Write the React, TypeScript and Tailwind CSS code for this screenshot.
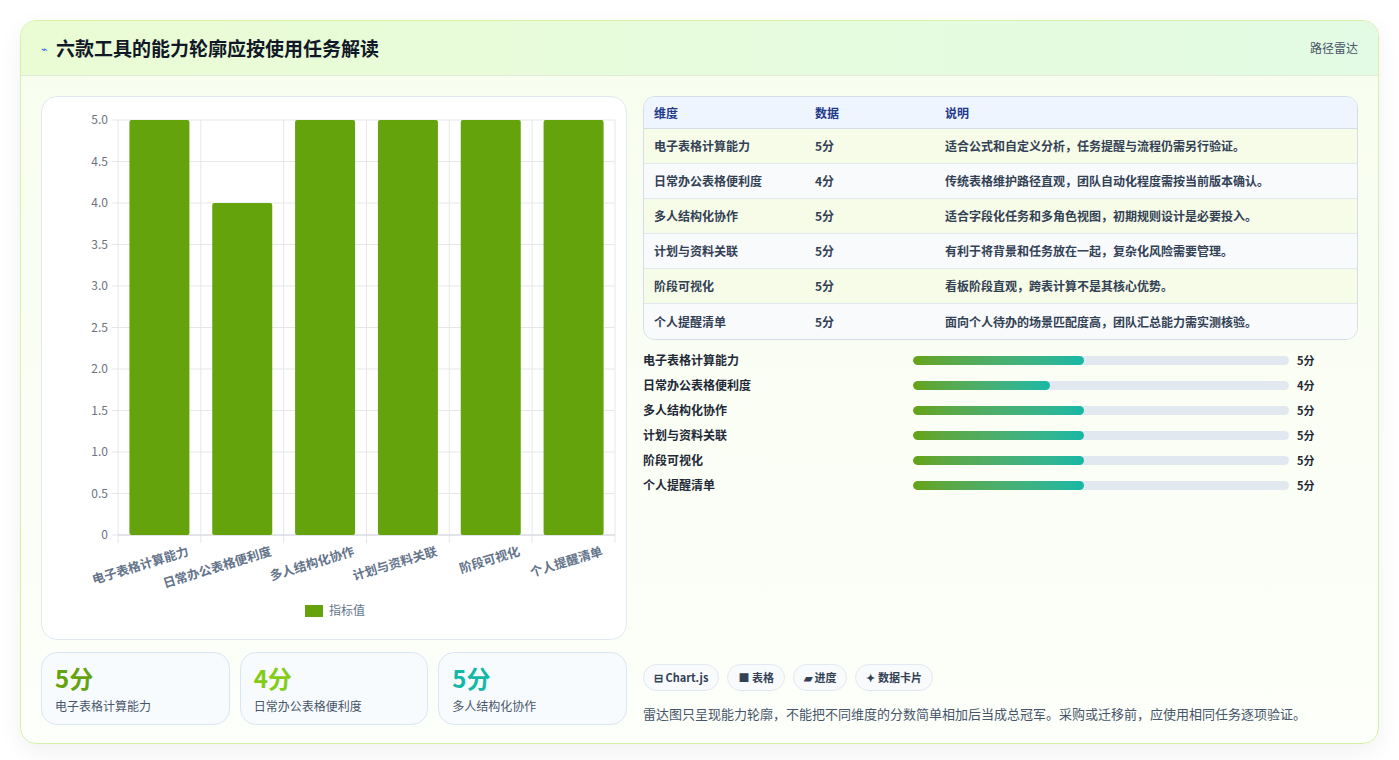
import React from "react";

const dims = [
  ["电子表格计算能力", 5, "适合公式和自定义分析，任务提醒与流程仍需另行验证。"],
  ["日常办公表格便利度", 4, "传统表格维护路径直观，团队自动化程度需按当前版本确认。"],
  ["多人结构化协作", 5, "适合字段化任务和多角色视图，初期规则设计是必要投入。"],
  ["计划与资料关联", 5, "有利于将背景和任务放在一起，复杂化风险需要管理。"],
  ["阶段可视化", 5, "看板阶段直观，跨表计算不是其核心优势。"],
  ["个人提醒清单", 5, "面向个人待办的场景匹配度高，团队汇总能力需实测核验。"],
] as const;

const font = { fontFamily: '"Noto Sans CJK SC", "Noto Sans", sans-serif' };

function Chart() {
  const x0 = 76, x1 = 573, yTop = 23, yBot = 438;
  const step = (x1 - x0) / 6;
  const ticks = [0, 0.5, 1, 1.5, 2, 2.5, 3, 3.5, 4, 4.5, 5];
  return (
    <svg width="586" height="542" style={font}>
      {ticks.map((t) => {
        const y = yBot - (t / 5) * (yBot - yTop);
        return (
          <g key={t}>
            <line x1={x0 - 6} x2={x1} y1={y} y2={y} stroke="#e5e7eb" />
            <text x={x0 - 10} y={y + 4} fontSize="12" fill="#6b7280" textAnchor="end">
              {t === 0 ? "0" : t.toFixed(1)}
            </text>
          </g>
        );
      })}
      {Array.from({ length: 7 }).map((_, i) => (
        <line key={i} x1={x0 + i * step} x2={x0 + i * step} y1={yTop} y2={yBot + 8} stroke="#e5e7eb" />
      ))}
      <line x1={x0} x2={x1} y1={yBot} y2={yBot} stroke="#d1d5db" />
      {dims.map((d, i) => {
        const h = (d[1] / 5) * (yBot - yTop);
        const cx = x0 + i * step + step / 2;
        return (
          <g key={i}>
            <rect x={cx - 30} y={yBot - h} width="60" height={h} rx="2" fill="#65a30d" />
            <text x={cx + 30} y={yBot + 20} fontSize="12.5" fontWeight="700" fill="#64748b" textAnchor="end" transform={`rotate(-17 ${cx + 30} ${yBot + 20})`}>
              {d[0]}
            </text>
          </g>
        );
      })}
      <rect x="263" y="508" width="18" height="12" fill="#65a30d" />
      <text x="287" y="518" fontSize="12" fill="#64748b">指标值</text>
    </svg>
  );
}

export default function App() {
  const statColors = ["#65a30d", "#84cc16", "#14b8a6"];
  return (
    <div className="min-h-[760px] bg-white p-5" style={font}>
      <div className="rounded-2xl border border-[#d9f0a8] bg-gradient-to-b from-[#f7fdee] to-[#fdfffa] shadow-[0_8px_24px_rgba(0,0,0,0.06)] overflow-hidden">
        <div className="h-[55px] flex items-center justify-between px-5 bg-gradient-to-r from-[#eafcd4] to-[#e3fbe4] border-b border-[#e2ebd6]">
          <div className="flex items-center gap-2">
            <span className="text-[#2563eb] text-[11px]">⌁</span>
            <span className="text-[19px] font-bold text-[#111827]">六款工具的能力轮廓应按使用任务解读</span>
          </div>
          <span className="text-[12px] text-[#475569]">路径雷达</span>
        </div>
        <div className="flex gap-4 p-5 pb-[18px]">
          <div className="w-[586px] flex flex-col gap-3">
            <div className="h-[544px] rounded-2xl border border-[#e2e8f0] bg-white">
              <Chart />
            </div>
            <div className="grid grid-cols-3 gap-[10px]">
              {dims.slice(0, 3).map((d, i) => (
                <div key={i} className="h-[73px] rounded-2xl border border-[#dbe6f3] bg-[#f8fbfd] px-[13px] pt-[10px]">
                  <div className="text-[24px] font-bold leading-[30px]" style={{ color: statColors[i] }}>{d[1]}分</div>
                  <div className="text-[12px] text-[#475569] mt-[4px]">{d[0]}</div>
                </div>
              ))}
            </div>
          </div>
          <div className="flex-1 flex flex-col">
            <div className="rounded-xl border border-[#d5dde8] overflow-hidden text-[12px] font-semibold text-[#334155]">
              <div className="flex h-[32px] items-center bg-[#eef5fe] text-[#1e3a8a] border-b border-[#d5dde8]">
                <div className="w-[171px] pl-[10px]">维度</div>
                <div className="w-[130px]">数据</div>
                <div>说明</div>
              </div>
              {dims.map((d, i) => (
                <div key={i} className={`flex h-[35px] items-center ${i < 5 ? "border-b border-[#e2e8f0]" : ""} ${i % 2 === 0 ? "bg-[#f7fce9]" : "bg-[#f8fafc]"}`}>
                  <div className="w-[171px] pl-[10px]">{d[0]}</div>
                  <div className="w-[130px]">{d[1]}分</div>
                  <div>{d[2]}</div>
                </div>
              ))}
            </div>
            <div className="flex flex-col gap-[7px] mt-[11px]">
              {dims.map((d, i) => (
                <div key={i} className="flex items-center h-[18px] text-[12px] font-semibold text-[#1f2937]">
                  <div className="w-[270px]">{d[0]}</div>
                  <div className="w-[376px] h-[9px] rounded-full bg-[#e2e8f0] overflow-hidden">
                    <div className="h-full rounded-full bg-gradient-to-r from-[#65a30d] to-[#14b8a6]" style={{ width: `${(d[1] / 11) * 100}%` }} />
                  </div>
                  <div className="ml-2 text-[11px] font-bold">{d[1]}分</div>
                </div>
              ))}
            </div>
            <div className="mt-auto flex gap-2 text-[11px] font-semibold text-[#334155]">
              {["⊟ Chart.js", "■ 表格", "▰ 进度", "✦ 数据卡片"].map((c) => (
                <span key={c} className="h-[27px] flex items-center px-[10px] rounded-full border border-[#e2e8f0] bg-[#f8fafc]">{c}</span>
              ))}
            </div>
            <div className="mt-[13px] text-[13px] text-[#475569] mb-[2px]">雷达图只呈现能力轮廓，不能把不同维度的分数简单相加后当成总冠军。采购或迁移前，应使用相同任务逐项验证。</div>
          </div>
        </div>
      </div>
    </div>
  );
}
